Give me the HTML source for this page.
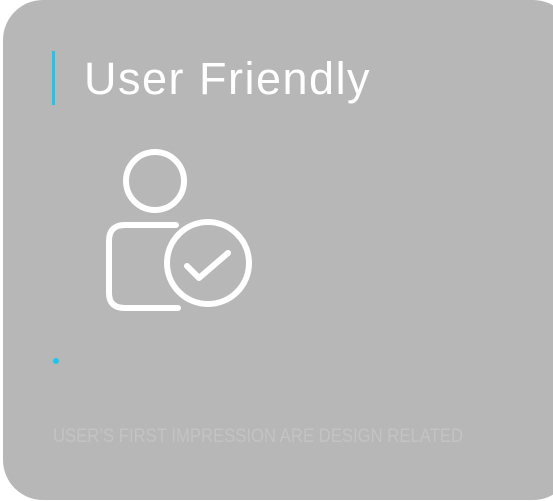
<!DOCTYPE html>
<html><head><style>
html,body{margin:0;padding:0;background:#fff;width:553px;height:501px;overflow:hidden}
.card{position:absolute;left:3px;top:0;width:570px;height:500px;background:#b7b7b7;border-radius:40px}
.bar{position:absolute;left:52px;top:51px;width:3px;height:54px;background:#1ec6ee}
.title{position:absolute;left:84px;top:52px;font:300 45px/54px "Liberation Sans",sans-serif;color:#fff;letter-spacing:1.5px}
.dot{position:absolute;left:53px;top:358px;width:6px;height:6px;border-radius:50%;background:#1ec6ee}
</style></head><body>
<div class="card"></div>
<div class="bar"></div>
<div class="title">User Friendly</div>
<svg style="position:absolute;left:0;top:0" width="553" height="501">
<g fill="none" stroke="#fff" stroke-width="6" stroke-linecap="round" stroke-linejoin="round">
<circle cx="155" cy="181" r="29"/>
<path d="M176 225 H125 Q109 225 109 241 V293 Q109 308 125 308 H178"/>
<circle cx="208" cy="263" r="41"/>
<path d="M187 266 L199 278 L228 253"/>
</g>
<text x="53" y="442" font-family="Liberation Sans, sans-serif" font-size="19" fill="#c3c3c3" textLength="410" lengthAdjust="spacingAndGlyphs">USER’S FIRST IMPRESSION ARE DESIGN RELATED</text>
</svg>
<div class="dot"></div>
</body></html>
